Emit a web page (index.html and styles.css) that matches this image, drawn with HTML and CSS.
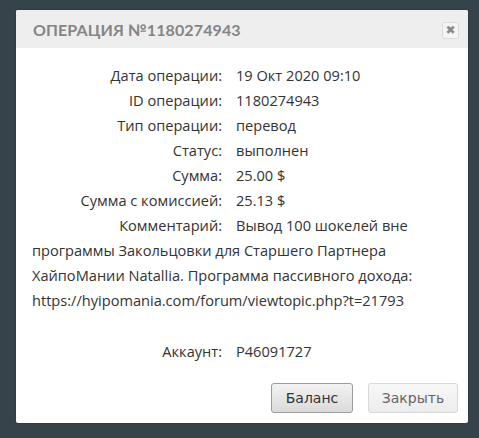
FILE: index.html
```html
<!DOCTYPE html>
<html>
<head>
<meta charset="utf-8">
<link rel="stylesheet" href="styles.css">
</head>
<body>
<div class="dialog">
  <div class="header">
    <span class="title">Операция №1180274943</span>
    <span class="close">&#x2716;</span>
  </div>
  <div class="content">
    <div class="row"><span class="label">Дата операции:</span><span class="value">19 Окт 2020 09:10</span></div>
    <div class="row"><span class="label">ID операции:</span><span class="value">1180274943</span></div>
    <div class="row"><span class="label">Тип операции:</span><span class="value">перевод</span></div>
    <div class="row"><span class="label">Статус:</span><span class="value">выполнен</span></div>
    <div class="row"><span class="label">Сумма:</span><span class="value">25.00 $</span></div>
    <div class="row"><span class="label">Сумма с комиссией:</span><span class="value">25.13 $</span></div>
    <div class="row"><span class="label">Комментарий:</span><span class="value">Вывод 100 шокелей вне программы Закольцовки для Старшего Партнера ХайпоМании Natallia. Программа пассивного дохода: https://hyipomania.com/forum/viewtopic.php?t=21793</span></div>
    <div class="row account"><span class="label">Аккаунт:</span><span class="value">P46091727</span></div>
  </div>
  <div class="buttons">
    <button class="btn primary">Баланс</button>
    <button class="btn secondary">Закрыть</button>
  </div>
</div>
</body>
</html>
```
FILE: styles.css
```css
html, body {
  margin: 0;
  padding: 0;
}
body {
  background: #36434b;
  width: 479px;
  height: 438px;
  overflow: hidden;
  padding: 10px 0 0 16px;
  box-sizing: border-box;
}
.dialog {
  width: 452px;
  height: 413px;
  background: #fff;
  border-radius: 2px;
  display: flex;
  flex-direction: column;
  box-shadow: 0 0 2px rgba(0,0,0,0.3);
}
.header {
  height: 38px;
  background: #eeeeee;
  border-radius: 2px 2px 0 0;
  display: flex;
  align-items: center;
  justify-content: space-between;
  padding: 0 9px 0 17px;
}
.title {
  font-family: Lato, "DejaVu Sans", sans-serif;
  font-weight: 700;
  font-size: 16px;
  letter-spacing: 0.1px;
  text-transform: uppercase;
  color: #858585;
}
.close {
  width: 15px;
  height: 15px;
  border: 1px solid #dcdcdc;
  border-radius: 2px;
  background: #f4f4f4;
  color: #888;
  font-family: "DejaVu Sans", sans-serif;
  font-size: 12px;
  display: flex;
  align-items: center;
  justify-content: center;
  margin-top: 2px;
}
.content {
  padding: 15px 16px 0 16px;
  font-family: "Open Sans", sans-serif;
  font-size: 14.6px;
  line-height: 25px;
  color: #333;
}
.label {
  display: inline-block;
  width: 190px;
  text-align: right;
  margin-right: 14px;
}
.account {
  margin-top: 26px;
}
.buttons {
  display: flex;
  justify-content: flex-end;
  gap: 15px;
  padding: 19px 10px 0 0;
}
.btn {
  height: 30px;
  border-radius: 3px;
  font-family: "DejaVu Sans", sans-serif;
  font-size: 14px;
  padding: 0;
}
.primary {
  width: 82px;
  border: 1px solid #9c9c9c;
  background: linear-gradient(#f2f2f2, #dadada);
  color: #333;
}
.secondary {
  width: 90px;
  border: 1px solid #d8d8d8;
  background: linear-gradient(#f8f8f8, #ececec);
  color: #666;
}
```
